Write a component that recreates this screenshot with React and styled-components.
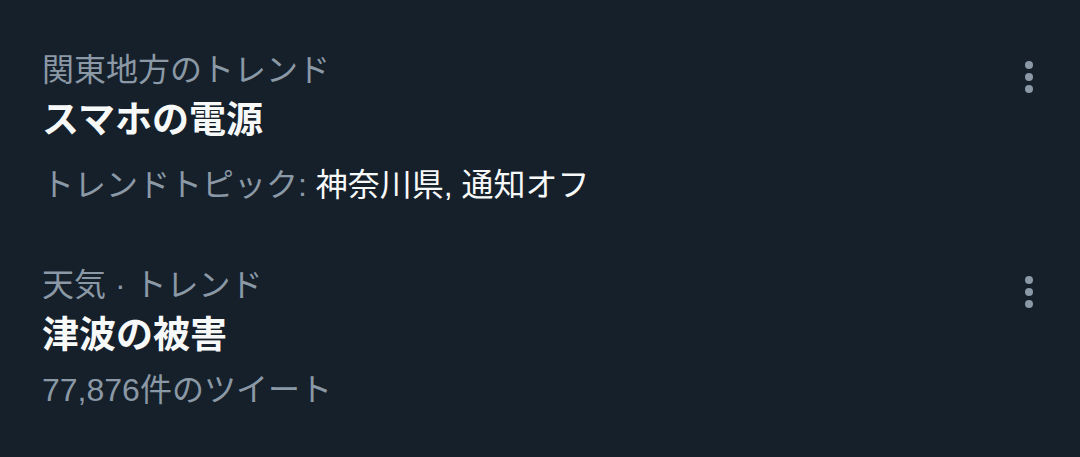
import React from "react";
import styled, { createGlobalStyle } from "styled-components";

const Global = createGlobalStyle`
  html, body {
    margin: 0;
    padding: 0;
    background: #15202b;
  }
  body {
    font-family: "Liberation Sans", "Noto Sans CJK JP", sans-serif;
  }
`;

const List = styled.div`
  width: 1080px;
  height: 457px;
  box-sizing: border-box;
  padding-top: 20px;
  background: #15202b;
  overflow: hidden;
`;

const Item = styled.div`
  display: flex;
  align-items: flex-start;
  padding: 30px 31px 30px 42px;
`;

const Content = styled.div`
  flex: 1;
  display: flex;
  flex-direction: column;
  min-width: 0;
`;

const Label = styled.div`
  font-size: 32px;
  line-height: 40px;
  height: 40px;
  color: #8b98a5;
  white-space: nowrap;
`;

const Title = styled.div`
  margin-top: 7px;
  font-size: 37px;
  line-height: 48px;
  height: 48px;
  font-weight: 700;
  color: #f7f9f9;
  white-space: nowrap;
`;

const Meta = styled.div`
  margin-top: ${(p) => p.$gap}px;
  font-size: 32px;
  line-height: 40px;
  height: 40px;
  color: #8b98a5;
  white-space: nowrap;
`;

const Highlight = styled.span`
  color: #f7f9f9;
`;

const MoreButton = styled.div`
  width: 40px;
  height: 40px;
  margin-top: 7px;
  flex: none;
  display: flex;
  align-items: center;
  justify-content: center;
  color: #8b98a5;
`;

const More = () => (
  <MoreButton>
    <svg width="40" height="40" viewBox="0 0 40 40" fill="currentColor">
      <circle cx="20" cy="8" r="4" />
      <circle cx="20" cy="20" r="4" />
      <circle cx="20" cy="32" r="4" />
    </svg>
  </MoreButton>
);

export default function App() {
  return (
    <>
      <Global />
      <List>
        <Item>
          <Content>
            <Label>関東地方のトレンド</Label>
            <Title>スマホの電源</Title>
            <Meta $gap={20}>
              トレンドトピック: <Highlight>神奈川県, 通知オフ</Highlight>
            </Meta>
          </Content>
          <More />
        </Item>
        <Item>
          <Content>
            <Label>天気 · トレンド</Label>
            <Title>津波の被害</Title>
            <Meta $gap={10}>77,876件のツイート</Meta>
          </Content>
          <More />
        </Item>
      </List>
    </>
  );
}
